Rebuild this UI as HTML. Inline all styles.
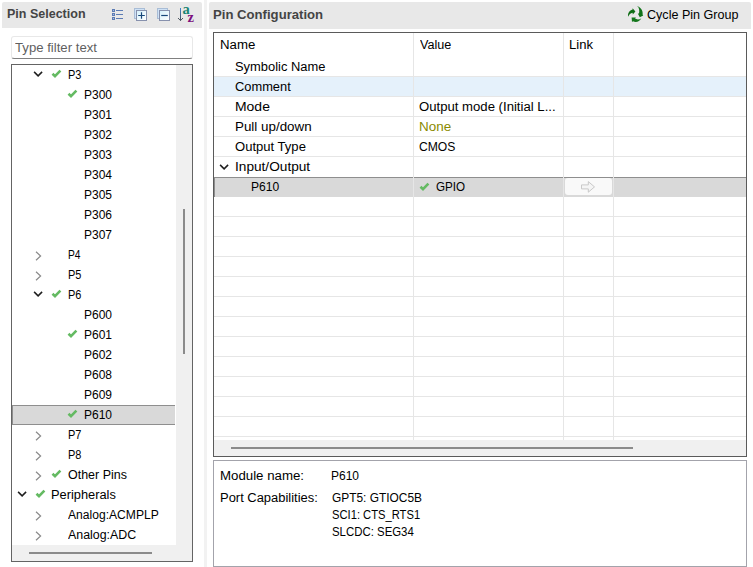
<!DOCTYPE html>
<html><head><meta charset="utf-8"><title>Pin Configuration</title>
<style>
html,body{margin:0;padding:0;background:#fff;}
body{width:753px;height:567px;position:relative;overflow:hidden;font-family:"Liberation Sans",sans-serif;font-size:12px;color:#000;}
div,span,svg{position:absolute;box-sizing:border-box;}
.t{white-space:nowrap;line-height:20px;height:20px;transform-origin:0 0;}
.hd{background:#e8e8e8;border-radius:2px 2px 0 0;}
.b{font-weight:bold;font-size:13px;color:#444;}
.ck{overflow:visible;}
.vl{background:#e6e6e6;width:1px;}
.tr{background:#f0f0f0;}
.th{background:#8b8b8b;}
</style></head><body>
<div class="hd" style="left:2px;top:2px;width:200px;height:26px"></div>
<div class="hd" style="left:209px;top:2px;width:542px;height:27px"></div>
<div style="left:204px;top:0;width:3px;height:567px;background:#f2f2f2"></div>
<svg style="left:108px;top:2px" width="92" height="26" viewBox="108 2 92 26">
<defs>
<linearGradient id="gf" x1="0" y1="0" x2="1" y2="1"><stop offset="0" stop-color="#d4f0fb"/><stop offset="1" stop-color="#ffffff"/></linearGradient>
<linearGradient id="ga" x1="0" y1="0" x2="0" y2="1"><stop offset="0" stop-color="#3f86cc"/><stop offset="1" stop-color="#444c55"/></linearGradient>
</defs>
<g fill="#5c7cb4">
<rect x="112" y="9" width="3" height="3"/><rect x="112" y="13" width="3" height="3"/><rect x="112" y="17" width="3" height="3"/>
<rect x="116" y="10" width="7" height="1"/><rect x="116" y="14" width="7" height="1"/><rect x="116" y="18" width="7" height="1"/>
</g>
<g fill="#a9bbdc"><rect x="113" y="10" width="1" height="1"/><rect x="113" y="14" width="1" height="1"/><rect x="113" y="18" width="1" height="1"/></g>
<rect x="134.5" y="8.5" width="10" height="10" fill="#cfe2f6" stroke="#a9bdd6"/>
<rect x="136.5" y="10.5" width="10" height="10" fill="url(#gf)" stroke="#8791ad"/>
<path d="M138.2 15.5 H144.8 M141.5 12.2 V18.8" stroke="#17477a" stroke-width="1.2" fill="none"/>
<rect x="157.5" y="8.5" width="10" height="10" fill="#cfe2f6" stroke="#a9bdd6"/>
<rect x="159.5" y="10.5" width="10" height="10" fill="url(#gf)" stroke="#8791ad"/>
<path d="M161.2 15.5 H167.8" stroke="#17477a" stroke-width="1.2" fill="none"/>
<rect x="180" y="8" width="1" height="12.6" fill="url(#ga)"/>
<path d="M178 18 L180.5 20.6 L183 18" stroke="#4f5862" stroke-width="1" fill="none"/>
<text x="182.6" y="13.6" font-family="'Liberation Serif',serif" font-weight="bold" font-size="14.5" fill="#1a8573">a</text>
<text x="187.6" y="21.6" font-family="'Liberation Serif',serif" font-weight="bold" font-size="14.5" fill="#7d0f7d">z</text>
</svg>
<svg style="left:626px;top:4px" width="20" height="20" viewBox="626 4 20 20">
<path d="M636.8 6.0 C640.8 7.2 643.2 10.8 642.6 14.6 L643.2 15.4 L639.8 17.2 L637.8 13.6 L639.0 13.6 C639.6 10.8 639.2 8.2 637.6 6.0 Z" fill="#117319"/>
<path d="M628.2 16.8 C627.4 13.2 629.4 10.2 632.6 9.4 L632.6 8.2 L635.4 11.4 L632.8 14.4 L632.6 12.8 C630.6 13.2 629.0 14.6 628.2 16.8 Z" fill="#0e6d14"/>
<path d="M641.4 18.2 C639.6 21.6 636.0 22.8 633.0 21.2 L632.0 22.0 L631.6 17.4 L636.0 17.6 L635.0 18.6 C637.0 19.8 639.4 19.6 641.4 18.2 Z" fill="#13761b"/>
</svg>

<div style="left:11px;top:36px;width:182px;height:23px;border:1px solid #e8e8e8;border-bottom-color:#808080;border-radius:3px;background:#fff"></div>
<div style="left:11px;top:64px;width:182px;height:498px;border:1px solid #646464;background:#fff"></div>
<div class="tr" style="left:176px;top:65px;width:16px;height:496px"></div>
<div class="tr" style="left:12px;top:545px;width:180px;height:16px"></div>
<div class="th" style="left:183px;top:209px;width:2px;height:145px"></div>
<div class="th" style="left:29px;top:552px;width:123px;height:2px"></div>
<svg class="ck" style="left:33.0px;top:71.4px" width="11" height="7" viewBox="0 0 11 7"><path d="M1.1 0.9 L5.1 4.9 L9.1 0.9" fill="none" stroke="#1e1e1e" stroke-width="1.5"/></svg>
<svg class="ck" style="left:50.8px;top:68.7px" width="12" height="10" viewBox="0 0 12 10"><path d="M1.5 4.8 L4.0 7.2 L9.4 1.7" fill="none" stroke="#64ba62" stroke-width="2.6" stroke-linejoin="miter"/></svg>
<svg class="ck" style="left:66.8px;top:88.7px" width="12" height="10" viewBox="0 0 12 10"><path d="M1.5 4.8 L4.0 7.2 L9.4 1.7" fill="none" stroke="#64ba62" stroke-width="2.6" stroke-linejoin="miter"/></svg>
<svg class="ck" style="left:35px;top:250.5px" width="7" height="10" viewBox="0 0 7 10"><path d="M1 0.8 L5.6 5 L1 9.2" fill="none" stroke="#8a8a8a" stroke-width="1.2"/></svg>
<svg class="ck" style="left:35px;top:270.5px" width="7" height="10" viewBox="0 0 7 10"><path d="M1 0.8 L5.6 5 L1 9.2" fill="none" stroke="#8a8a8a" stroke-width="1.2"/></svg>
<svg class="ck" style="left:33.0px;top:291.4px" width="11" height="7" viewBox="0 0 11 7"><path d="M1.1 0.9 L5.1 4.9 L9.1 0.9" fill="none" stroke="#1e1e1e" stroke-width="1.5"/></svg>
<svg class="ck" style="left:50.8px;top:288.7px" width="12" height="10" viewBox="0 0 12 10"><path d="M1.5 4.8 L4.0 7.2 L9.4 1.7" fill="none" stroke="#64ba62" stroke-width="2.6" stroke-linejoin="miter"/></svg>
<svg class="ck" style="left:66.8px;top:328.7px" width="12" height="10" viewBox="0 0 12 10"><path d="M1.5 4.8 L4.0 7.2 L9.4 1.7" fill="none" stroke="#64ba62" stroke-width="2.6" stroke-linejoin="miter"/></svg>
<div style="left:12px;top:405px;width:163px;height:20px;background:#d9d9d9;border:1px solid #8e8e8e;border-right:none"></div>
<svg class="ck" style="left:66.8px;top:408.7px" width="12" height="10" viewBox="0 0 12 10"><path d="M1.5 4.8 L4.0 7.2 L9.4 1.7" fill="none" stroke="#64ba62" stroke-width="2.6" stroke-linejoin="miter"/></svg>
<svg class="ck" style="left:35px;top:430.5px" width="7" height="10" viewBox="0 0 7 10"><path d="M1 0.8 L5.6 5 L1 9.2" fill="none" stroke="#8a8a8a" stroke-width="1.2"/></svg>
<svg class="ck" style="left:35px;top:450.5px" width="7" height="10" viewBox="0 0 7 10"><path d="M1 0.8 L5.6 5 L1 9.2" fill="none" stroke="#8a8a8a" stroke-width="1.2"/></svg>
<svg class="ck" style="left:35px;top:470.5px" width="7" height="10" viewBox="0 0 7 10"><path d="M1 0.8 L5.6 5 L1 9.2" fill="none" stroke="#8a8a8a" stroke-width="1.2"/></svg>
<svg class="ck" style="left:50.8px;top:468.7px" width="12" height="10" viewBox="0 0 12 10"><path d="M1.5 4.8 L4.0 7.2 L9.4 1.7" fill="none" stroke="#64ba62" stroke-width="2.6" stroke-linejoin="miter"/></svg>
<svg class="ck" style="left:17.0px;top:491.4px" width="11" height="7" viewBox="0 0 11 7"><path d="M1.1 0.9 L5.1 4.9 L9.1 0.9" fill="none" stroke="#1e1e1e" stroke-width="1.5"/></svg>
<svg class="ck" style="left:34.8px;top:488.7px" width="12" height="10" viewBox="0 0 12 10"><path d="M1.5 4.8 L4.0 7.2 L9.4 1.7" fill="none" stroke="#64ba62" stroke-width="2.6" stroke-linejoin="miter"/></svg>
<svg class="ck" style="left:35px;top:510.5px" width="7" height="10" viewBox="0 0 7 10"><path d="M1 0.8 L5.6 5 L1 9.2" fill="none" stroke="#8a8a8a" stroke-width="1.2"/></svg>
<svg class="ck" style="left:35px;top:530.5px" width="7" height="10" viewBox="0 0 7 10"><path d="M1 0.8 L5.6 5 L1 9.2" fill="none" stroke="#8a8a8a" stroke-width="1.2"/></svg>
<div style="left:213px;top:32px;width:534px;height:425px;border:1px solid #5a5a5a;background:#fff"></div>
<div style="left:214px;top:77px;width:532px;height:19px;background:#e5f1fb"></div>
<div style="left:214px;top:76px;width:532px;height:1px;background:#e6e6e6"></div>
<div style="left:214px;top:96px;width:532px;height:1px;background:#e6e6e6"></div>
<div style="left:214px;top:116px;width:532px;height:1px;background:#e6e6e6"></div>
<div style="left:214px;top:136px;width:532px;height:1px;background:#e6e6e6"></div>
<div style="left:214px;top:156px;width:532px;height:1px;background:#e6e6e6"></div>
<div style="left:214px;top:196px;width:532px;height:1px;background:#e6e6e6"></div>
<div style="left:214px;top:216px;width:532px;height:1px;background:#e6e6e6"></div>
<div style="left:214px;top:236px;width:532px;height:1px;background:#e6e6e6"></div>
<div style="left:214px;top:256px;width:532px;height:1px;background:#e6e6e6"></div>
<div style="left:214px;top:276px;width:532px;height:1px;background:#e6e6e6"></div>
<div style="left:214px;top:296px;width:532px;height:1px;background:#e6e6e6"></div>
<div style="left:214px;top:316px;width:532px;height:1px;background:#e6e6e6"></div>
<div style="left:214px;top:336px;width:532px;height:1px;background:#e6e6e6"></div>
<div style="left:214px;top:356px;width:532px;height:1px;background:#e6e6e6"></div>
<div style="left:214px;top:376px;width:532px;height:1px;background:#e6e6e6"></div>
<div style="left:214px;top:396px;width:532px;height:1px;background:#e6e6e6"></div>
<div style="left:214px;top:416px;width:532px;height:1px;background:#e6e6e6"></div>
<div style="left:214px;top:436px;width:532px;height:1px;background:#e6e6e6"></div>
<div style="left:214px;top:177px;width:532px;height:20px;background:#d9d9d9;border-top:1px solid #8e8e8e;border-left:1px solid #8e8e8e;"></div>
<div class="vl" style="left:413px;top:33px;height:407px"></div>
<div class="vl" style="left:563px;top:33px;height:407px"></div>
<div class="vl" style="left:613px;top:33px;height:407px"></div>
<div class="tr" style="left:214px;top:440px;width:532px;height:16px"></div>
<div class="th" style="left:231px;top:447px;width:402px;height:2px"></div>
<svg class="ck" style="left:219px;top:163.5px" width="11" height="7" viewBox="0 0 11 7"><path d="M1.1 0.9 L5.1 4.9 L9.1 0.9" fill="none" stroke="#1e1e1e" stroke-width="1.5"/></svg>
<svg class="ck" style="left:419.3px;top:181.7px" width="12" height="10" viewBox="0 0 12 10"><path d="M1.5 4.8 L4.0 7.2 L9.4 1.7" fill="none" stroke="#64ba62" stroke-width="2.6" stroke-linejoin="miter"/></svg>
<div style="left:565px;top:178px;width:47px;height:17px;background:#f9f9f9;border-radius:3px"></div>
<svg style="left:580px;top:180px" width="16" height="14" viewBox="0 0 16 14"><path d="M1.5 4.9 H8.3 V1.6 L14.5 6.9 L8.3 12.2 V8.9 H1.5 Z" fill="#f5f5f5" stroke="#c9c9c9" stroke-width="1"/></svg>
<div style="left:213px;top:460px;width:534px;height:107px;border:1px solid #a3a3ab;background:#fff"></div>
<div class="t b" style="left:7px;top:4px;transform:scaleX(0.962);">Pin Selection</div>
<div class="t b" style="left:213px;top:5px;transform:scaleX(1.010);">Pin Configuration</div>
<div class="t" style="left:647px;top:5px;transform:scaleX(1.047);">Cycle Pin Group</div>
<div class="t" style="left:15px;top:38px;transform:scaleX(1.097);color:#5f5f5f">Type filter text</div>
<div class="t" style="left:68px;top:65px;transform:scaleX(0.914);">P3</div>
<div class="t" style="left:84px;top:85px;">P300</div>
<div class="t" style="left:84px;top:105px;">P301</div>
<div class="t" style="left:84px;top:125px;">P302</div>
<div class="t" style="left:84px;top:145px;">P303</div>
<div class="t" style="left:84px;top:165px;">P304</div>
<div class="t" style="left:84px;top:185px;">P305</div>
<div class="t" style="left:84px;top:205px;">P306</div>
<div class="t" style="left:84px;top:225px;">P307</div>
<div class="t" style="left:68px;top:245px;transform:scaleX(0.852);">P4</div>
<div class="t" style="left:68px;top:265px;transform:scaleX(0.914);">P5</div>
<div class="t" style="left:68px;top:285px;transform:scaleX(0.914);">P6</div>
<div class="t" style="left:84px;top:305px;">P600</div>
<div class="t" style="left:84px;top:325px;">P601</div>
<div class="t" style="left:84px;top:345px;">P602</div>
<div class="t" style="left:84px;top:365px;">P608</div>
<div class="t" style="left:84px;top:385px;">P609</div>
<div class="t" style="left:84px;top:405px;">P610</div>
<div class="t" style="left:68px;top:425px;transform:scaleX(0.914);">P7</div>
<div class="t" style="left:68px;top:445px;transform:scaleX(0.914);">P8</div>
<div class="t" style="left:68px;top:465px;transform:scaleX(1.039);">Other Pins</div>
<div class="t" style="left:51px;top:485px;transform:scaleX(1.068);">Peripherals</div>
<div class="t" style="left:68px;top:505px;transform:scaleX(1.008);">Analog:ACMPLP</div>
<div class="t" style="left:68px;top:525px;transform:scaleX(1.033);">Analog:ADC</div>
<div class="t" style="left:220px;top:35px;transform:scaleX(1.103);">Name</div>
<div class="t" style="left:420px;top:35px;transform:scaleX(1.050);">Value</div>
<div class="t" style="left:569px;top:35px;transform:scaleX(1.090);">Link</div>
<div class="t" style="left:235px;top:57px;transform:scaleX(1.075);">Symbolic Name</div>
<div class="t" style="left:235px;top:77px;transform:scaleX(1.071);">Comment</div>
<div class="t" style="left:235px;top:97px;transform:scaleX(1.162);">Mode</div>
<div class="t" style="left:235px;top:117px;transform:scaleX(1.115);">Pull up/down</div>
<div class="t" style="left:235px;top:137px;transform:scaleX(1.088);">Output Type</div>
<div class="t" style="left:235px;top:157px;transform:scaleX(1.138);">Input/Output</div>
<div class="t" style="left:251px;top:177px;transform:scaleX(1.007);">P610</div>
<div class="t" style="left:419px;top:97px;transform:scaleX(1.095);">Output mode (Initial L...</div>
<div class="t" style="left:419px;top:117px;transform:scaleX(1.123);color:#8a8a00">None</div>
<div class="t" style="left:419px;top:137px;transform:scaleX(1.011);">CMOS</div>
<div class="t" style="left:436px;top:177px;transform:scaleX(0.970);">GPIO</div>
<div class="t" style="left:220px;top:466px;transform:scaleX(1.105);">Module name:</div>
<div class="t" style="left:331px;top:466px;">P610</div>
<div class="t" style="left:220px;top:488px;transform:scaleX(1.078);">Port Capabilities:</div>
<div class="t" style="left:332px;top:488px;transform:scaleX(0.992);">GPT5: GTIOC5B</div>
<div class="t" style="left:332px;top:505px;transform:scaleX(0.933);">SCI1: CTS_RTS1</div>
<div class="t" style="left:332px;top:522px;transform:scaleX(0.951);">SLCDC: SEG34</div>
</body></html>
